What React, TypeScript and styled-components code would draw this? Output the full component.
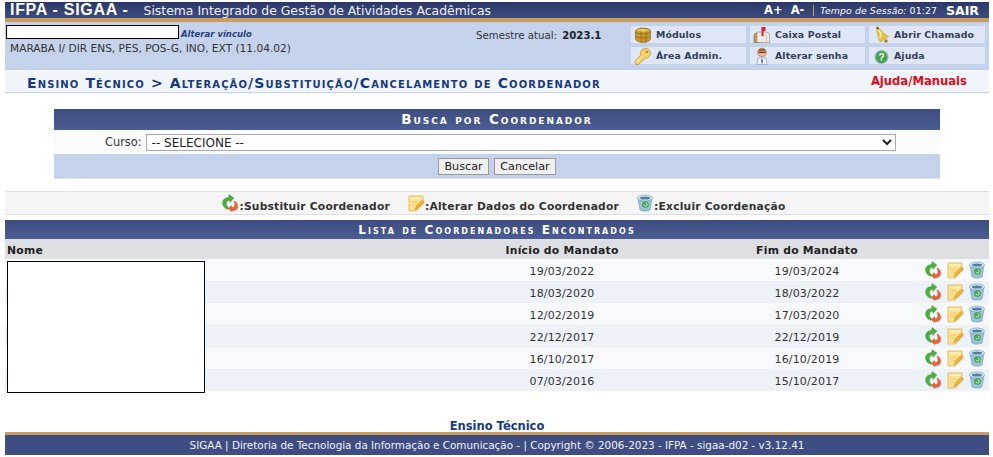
import React from "react";
import styled, { createGlobalStyle } from "styled-components";

const Global = createGlobalStyle`
  html, body { margin: 0; padding: 0; background: #fff; overflow: hidden; }
  body { font-family: "DejaVu Sans", Verdana, sans-serif; font-size: 11px; color: #222; }
`;

const Page = styled.div`
  width: 984px;
  height: 457px;
  margin-left: 5px;
  padding-top: 2px;
  box-sizing: border-box;
  display: flex;
  flex-direction: column;
`;

const TopBar = styled.header`
  height: 16px;
  box-sizing: content-box;
  border-bottom: 4px solid #c99e5e;
  background: linear-gradient(#2b3768, #3d4c80);
  color: #fff;
  display: flex;
  align-items: center;
  padding: 0 10px 0 5px;
`;
const Brand = styled.span`
  font: bold 16px "Liberation Sans", Arial, sans-serif;
  letter-spacing: 0.7px;
  margin-right: 15px;
  white-space: pre;
`;
const SystemName = styled.span`
  font-size: 12.4px;
  color: #f0f2f8;
  flex: 1;
`;
const FontSizer = styled.span`
  font-size: 11.5px;
  font-weight: bold;
  margin-right: 8px;
`;
const SessionTime = styled.span`
  border-left: 1px solid #c99e5e;
  margin-left: 1px;
  padding-left: 6px;
  font-size: 9.4px;
  letter-spacing: 0.08px;
  em { font-style: italic; }
`;
const Exit = styled.span`
  font-size: 12.5px;
  font-weight: bold;
  margin-left: 9px;
`;

const InfoPanel = styled.section`
  height: 48px;
  background: #c4d2eb;
  display: flex;
`;
const UserBlock = styled.div`
  width: 626px;
  padding: 3px 0 0 1px;
  box-sizing: border-box;
  position: relative;
`;
const UserLine = styled.div`
  display: flex;
  align-items: center;
  gap: 2px;
`;
const NameMask = styled.div`
  width: 171px;
  height: 12px;
  border: 1px solid #000;
  background: #fff;
`;
const SwitchLink = styled.a`
  font-size: 8.5px;
  font-weight: bold;
  font-style: italic;
  color: #283f7e;
  margin-top: 4px;
`;
const UnitLine = styled.div`
  font-size: 10.6px;
  color: #333;
  margin: 3px 0 0 4px;
`;
const Semester = styled.div`
  position: absolute;
  left: 471px;
  top: 8px;
  font-size: 10.2px;
  color: #333;
  b { color: #222; margin-left: 2px; }
`;
const Shortcuts = styled.nav`
  display: grid;
  grid-template-columns: 115px 115px 116px;
  grid-auto-rows: 17px;
  gap: 4px;
  padding-top: 4px;
`;
const Shortcut = styled.a`
  background: #dfe7f6;
  display: flex;
  align-items: center;
  font-size: 9.4px;
  font-weight: bold;
  color: #33405c;
  position: relative;
  padding-left: 25px;
  letter-spacing: 0.1px;
  svg { position: absolute; left: 3px; top: 0; width: 18px; height: 18px; }
`;

const TitleBar = styled.div`
  height: 22px;
  background: #f1f4fb;
  border-bottom: 1px solid #c4d2eb;
  display: flex;
  align-items: center;
  justify-content: space-between;
  padding: 0 22px;
`;
const Title = styled.h2`
  margin: 4px 0 0;
  font-size: 14px;
  font-weight: bold;
  font-variant: small-caps;
  letter-spacing: 1.12px;
  color: #163a7f;
  white-space: nowrap;
`;
const HelpLink = styled.a`
  font-size: 11.6px;
  font-weight: bold;
  color: #e00b16;
`;

const Form = styled.form`
  margin: 16px 49px 0;
  width: 886px;
  border-bottom: 1px solid #dfe3ee;
`;
const Band = styled.div`
  background: linear-gradient(#3d4c80, #4b5d93);
  color: #fff;
  text-align: center;
  font-weight: bold;
  font-variant: small-caps;
  white-space: nowrap;
`;
const FormCaption = styled(Band)`
  height: 21px;
  line-height: 21px;
  font-size: 13.5px;
  letter-spacing: 1.95px;
`;
const FormRow = styled.div`
  height: 24px;
  background: #fafbfd;
  display: flex;
  align-items: center;
  padding-left: 51px;
  gap: 4px;
  color: #333;
  font-size: 11.4px;
`;
const CourseSelect = styled.select`
  width: 750px;
  height: 17px;
  padding: 0 1px;
  background: #fff;
  border: 1px solid #a9a9a9;
  font: 12px "DejaVu Sans", sans-serif;
  color: #222;
  border-radius: 0;
`;
const FormFoot = styled.div`
  height: 24px;
  background: #c4d2eb;
  display: flex;
  justify-content: center;
  align-items: center;
  gap: 5px;
`;
const Button = styled.button<{ $width: number }>`
  height: 17px;
  width: ${(p) => p.$width}px;
  padding: 0;
  background: #f0f0f0;
  border: 1px solid #9a9a9a;
  font: 11.2px "DejaVu Sans", sans-serif;
  color: #222;
  border-radius: 0;
`;

const Legend = styled.div`
  margin-top: 12px;
  height: 22px;
  box-sizing: content-box;
  background: #f5f5f5;
  border-top: 1px solid #e0e0e0;
  border-bottom: 1px solid #e0e0e0;
  display: flex;
  justify-content: center;
  gap: 17px;
  align-items: center;
  font-size: 10.7px;
  font-weight: bold;
  color: #333;
  letter-spacing: 0.22px;
  padding-left: 13px;
`;
const LegendItem = styled.span`
  display: flex;
  align-items: flex-end;
  padding-top: 1px;
  line-height: 15px;
  svg { width: 18px; height: 18px; margin-bottom: 2px; }
`;

const ListWrap = styled.section`
  margin-top: 5px;
  position: relative;
`;
const ListCaption = styled(Band)`
  height: 19px;
  line-height: 20px;
  font-size: 12px;
  letter-spacing: 2.05px;
`;
const Table = styled.table`
  width: 100%;
  border-collapse: collapse;
  table-layout: fixed;
`;
const HeadCell = styled.th<{ $left?: boolean }>`
  height: 20px;
  box-sizing: border-box;
  padding: 2px 2px 0;
  background: #dedfe3;
  font-size: 10.8px;
  font-weight: bold;
  color: #222;
  letter-spacing: 0.25px;
  text-align: ${(p) => (p.$left ? "left" : "center")};
`;
const Row = styled.tr<{ $even: boolean }>`
  background: ${(p) => (p.$even ? "#f8f9fc" : "#edf1f8")};
`;
const Cell = styled.td`
  height: 22px;
  box-sizing: border-box;
  padding: 2px 0 0;
  text-align: center;
  font-size: 11px;
  color: #333;
  letter-spacing: 0.15px;
`;
const ActionCell = styled(Cell)`
  padding: 0;
`;
const Actions = styled.div`
  display: flex;
  justify-content: flex-end;
  gap: 4px;
  padding-right: 3px;
  svg { width: 18px; height: 18px; flex: none; }
`;
const NameRedaction = styled.div`
  position: absolute;
  left: 2px;
  top: 41px;
  width: 196px;
  height: 130px;
  background: #fff;
  border: 1px solid #000;
`;

const FooterLabel = styled.div`
  margin-top: 29px;
  text-align: center;
  font-size: 11.5px;
  font-weight: bold;
  color: #163a7f;
  line-height: 12px;
`;
const Footer = styled.footer`
  border-top: 3px solid #c99e5e;
  height: 20px;
  line-height: 20px;
  background: #3e4e82;
  color: #f0f2f8;
  text-align: center;
  font-size: 10.4px;
`;

const Svg: React.FC<{ children: React.ReactNode }> = ({ children }) => (
  <svg viewBox="0 0 18 18" aria-hidden="true">{children}</svg>
);

const Swap = () => (
  <Svg>
    <path d="M7 15.500C2.500 14 .5 10 2 6.500 3 4.500 5 3.500 7.500 3.500L8 .5l5 3.500-4 4.500-.5-2.300C6.500 6.500 5.200 8 5.500 10c.2 1.500.8 2.500 1.800 3.200z" fill="#4caf3f" stroke="#2f8a2c" strokeWidth=".3" />
    <path d="M13.500 7c2.800 1.500 4 4.500 3 7-1 2-3 2.800-5 2.500l-.5 1.300L7 14.500l3.500-3 .5 2c2 .1 3-1 2.800-3-.1-1.200-.4-2.400-.9-3.300z" fill="#e8623a" stroke="#c04424" strokeWidth=".3" />
  </Svg>
);
const Note = () => (
  <Svg>
    <path d="M2 2h14v7.500L9.500 17H2z" fill="#fbe190" stroke="#e3b24d" strokeWidth=".8" />
    <path d="M3 3.500h12v1.800H3z" fill="#fdf0bf" />
    <path d="M8 16l1.500-4.500 6-5.500 2 2.200-6 5.500z" fill="#f0b13b" stroke="#c98a25" strokeWidth=".5" />
    <path d="M4.500 8h6M4.500 11h3.500" stroke="#ecc56a" strokeWidth=".9" />
  </Svg>
);
const Bin = () => (
  <Svg>
    <path d="M2 4.500l2 11.500c2 1.500 8 1.500 10 0l2-11.500z" fill="#9cc1da" stroke="#6f9abb" strokeWidth=".6" />
    <ellipse cx="9" cy="4" rx="7.500" ry="3" fill="#d2e6f1" stroke="#6f9abb" strokeWidth=".6" />
    <ellipse cx="9" cy="4" rx="5" ry="1.500" fill="#567f9f" />
    <circle cx="9.500" cy="10.500" r="3.300" fill="#3da548" />
    <path d="M8 10.500a1.600 1.600 0 1 0 1.500-1.600" fill="none" stroke="#e8f6e8" strokeWidth=".9" />
  </Svg>
);
const BoxIcon = () => (
  <Svg>
    <path d="M1.500 4.500C4 1.500 13 1 16.500 4.500v9C13 17.500 5 17.500 1.500 13.500z" fill="#c9982a" stroke="#80601a" strokeWidth=".6" />
    <path d="M7 1.800c-.5 5 .5 11 0 14.700M12 2c.5 5 0 10 0 14.500M1.500 6.500c5 2 10 2 15 0M1.500 10.500c5 2 10 2 15 0" fill="none" stroke="#8a6a1c" strokeWidth=".7" />
    <path d="M2.500 4.500c4-2 9-2 13 0-4 1.500-9 1.500-13 0z" fill="#edc965" />
  </Svg>
);
const Mailbox = () => (
  <Svg>
    <path d="M1 10a3 3 0 0 1 6 0v6.500H1z" fill="#c59a5f" stroke="#7d5d33" strokeWidth=".6" />
    <path d="M4 6h9a3.500 3.500 0 0 1 3.500 3.500v7H4z" fill="#efeae2" stroke="#8d8a80" strokeWidth=".6" />
    <path d="M8.500 1h4v4h-2v5h-2z" fill="#d8232a" />
    <path d="M13.500 9v7" stroke="#c9c4b8" />
  </Svg>
);
const Bell = () => (
  <Svg>
    <path d="M4 1.500l3.500 1 4 4.500 5 3.500-8 5.500-2-3.500z" fill="#ecc03f" stroke="#b58f22" strokeWidth=".5" />
    <path d="M6 4l3 3-1 5" stroke="#fbf0ae" strokeWidth="1.500" fill="none" />
    <path d="M4.500 1l1.800-.5.700 2.500-1.800.5z" fill="#8a5d1c" />
    <circle cx="14" cy="15" r="1.700" fill="#a67d1c" />
  </Svg>
);
const Key = () => (
  <Svg>
    <path d="M1 14.500l.8 3h3l1.500-2 1.200-.5.300-1.500 1.700-.2 1.700-2a5 5 0 1 0-4.500-3.500z" fill="#f4d168" stroke="#bb8f2c" strokeWidth=".7" />
    <path d="M3 15l5-5" stroke="#fbeaa8" strokeWidth="1.200" />
    <ellipse cx="12.800" cy="4.800" rx="1.500" ry="1.100" fill="#b28629" />
  </Svg>
);
const Person = () => (
  <Svg>
    <circle cx="9" cy="5.500" r="4.300" fill="#efb98f" stroke="#80573a" strokeWidth=".5" />
    <path d="M4.800 4.500C5 .5 13 .5 13.200 4.500z" fill="#a86034" />
    <path d="M5.500 5.500h7" stroke="#5a3b24" strokeWidth="1" />
    <path d="M4 17.500l1-6.500h8l1 6.500z" fill="#eef1f8" stroke="#8694bd" strokeWidth=".6" />
    <path d="M9 11l-1 3 1 3.500 1-3.500z" fill="#3d5cb0" />
  </Svg>
);
const Question = () => (
  <Svg>
    <circle cx="9.500" cy="10" r="6.500" fill="#3da548" stroke="#a9b6bd" strokeWidth="1.200" />
    <text x="9.500" y="13.500" textAnchor="middle" fontSize="10" fontWeight="bold" fill="#fff" fontFamily="Liberation Sans">?</text>
  </Svg>
);

const rows = [
  ["19/03/2022", "19/03/2024"],
  ["18/03/2020", "18/03/2022"],
  ["12/02/2019", "17/03/2020"],
  ["22/12/2017", "22/12/2019"],
  ["16/10/2017", "16/10/2019"],
  ["07/03/2016", "15/10/2017"],
];

export default function App() {
  return (
    <>
      <Global />
      <Page>
        <TopBar>
          <Brand>IFPA - SIGAA -</Brand>
          <SystemName>Sistema Integrado de Gestão de Atividades Acadêmicas</SystemName>
          <FontSizer>A+</FontSizer>
          <FontSizer>A-</FontSizer>
          <SessionTime><em>Tempo de Sessão:</em> 01:27</SessionTime>
          <Exit>SAIR</Exit>
        </TopBar>
        <InfoPanel>
          <UserBlock>
            <UserLine>
              <NameMask />
              <SwitchLink>Alterar vínculo</SwitchLink>
            </UserLine>
            <UnitLine>MARABA I/ DIR ENS, PES, POS-G, INO, EXT (11.04.02)</UnitLine>
            <Semester>Semestre atual: <b>2023.1</b></Semester>
          </UserBlock>
          <Shortcuts>
            <Shortcut><BoxIcon />Módulos</Shortcut>
            <Shortcut><Mailbox />Caixa Postal</Shortcut>
            <Shortcut><Bell />Abrir Chamado</Shortcut>
            <Shortcut><Key />Área Admin.</Shortcut>
            <Shortcut><Person />Alterar senha</Shortcut>
            <Shortcut><Question />Ajuda</Shortcut>
          </Shortcuts>
        </InfoPanel>
        <TitleBar>
          <Title>Ensino Técnico &gt; Alteração/Substituição/Cancelamento de Coordenador</Title>
          <HelpLink>Ajuda/Manuais</HelpLink>
        </TitleBar>
        <Form onSubmit={(e) => e.preventDefault()}>
          <FormCaption>Busca por Coordenador</FormCaption>
          <FormRow>
            Curso:
            <CourseSelect defaultValue="0">
              <option value="0">-- SELECIONE --</option>
            </CourseSelect>
          </FormRow>
          <FormFoot>
            <Button type="button" $width={51}>Buscar</Button>
            <Button type="button" $width={62}>Cancelar</Button>
          </FormFoot>
        </Form>
        <Legend>
          <LegendItem><Swap />:Substituir Coordenador</LegendItem>
          <LegendItem><Note />:Alterar Dados do Coordenador</LegendItem>
          <LegendItem><Bin />:Excluir Coordenação</LegendItem>
        </Legend>
        <ListWrap>
          <ListCaption>Lista de Coordenadores Encontrados</ListCaption>
          <Table>
            <colgroup>
              <col style={{ width: 420 }} />
              <col style={{ width: 274 }} />
              <col style={{ width: 216 }} />
              <col />
            </colgroup>
            <thead>
              <tr>
                <HeadCell $left>Nome</HeadCell>
                <HeadCell>Início do Mandato</HeadCell>
                <HeadCell>Fim do Mandato</HeadCell>
                <HeadCell />
              </tr>
            </thead>
            <tbody>
              {rows.map(([start, end], i) => (
                <Row key={start} $even={i % 2 === 0}>
                  <Cell />
                  <Cell>{start}</Cell>
                  <Cell>{end}</Cell>
                  <ActionCell>
                    <Actions><Swap /><Note /><Bin /></Actions>
                  </ActionCell>
                </Row>
              ))}
            </tbody>
          </Table>
          <NameRedaction />
        </ListWrap>
        <FooterLabel>Ensino Técnico</FooterLabel>
        <Footer>SIGAA | Diretoria de Tecnologia da Informação e Comunicação - | Copyright © 2006-2023 - IFPA - sigaa-d02 - v3.12.41</Footer>
      </Page>
    </>
  );
}
